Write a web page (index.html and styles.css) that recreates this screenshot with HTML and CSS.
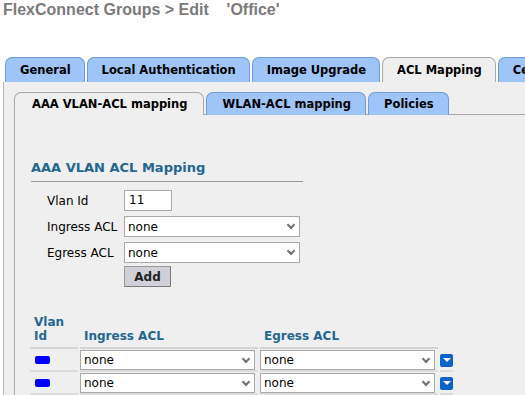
FILE: index.html
```html
<!DOCTYPE html>
<html lang="en">
<head>
  <meta charset="UTF-8" />
  <title>FlexConnect Groups &gt; Edit</title>
  <link rel="stylesheet" href="styles.css">
</head>
<body>
  <h1 class="page-title">FlexConnect Groups &gt; Edit &nbsp;&nbsp;&nbsp;'Office'</h1>

  <div class="tabs">
    <div class="tab">General</div>
    <div class="tab">Local Authentication</div>
    <div class="tab">Image Upgrade</div>
    <div class="tab active">ACL Mapping</div>
    <div class="tab">Central DHCP</div>
  </div>

  <div class="panel">
    <div class="subtabs">
      <div class="tab sub active">AAA VLAN-ACL mapping</div>
      <div class="tab sub">WLAN-ACL mapping</div>
      <div class="tab sub">Policies</div>
    </div>

    <div class="subpanel">
      <h2 class="section-title">AAA VLAN ACL Mapping</h2>

      <div class="form">
        <label for="vlan">Vlan Id</label>
        <input type="text" id="vlan" class="field short" value="11" />

        <label for="ingress">Ingress ACL</label>
        <span class="sel wide">
          <select id="ingress"><option>none</option></select>
        </span>

        <label for="egress">Egress ACL</label>
        <span class="sel wide">
          <select id="egress"><option>none</option></select>
        </span>

        <span></span>
        <div><button class="add-btn">Add</button></div>
      </div>

      <table class="map-table">
        <thead>
          <tr>
            <th class="c-id">Vlan<br>Id</th>
            <th class="c-acl">Ingress ACL</th>
            <th class="c-acl">Egress ACL</th>
            <th class="c-act"></th>
          </tr>
        </thead>
        <tbody>
          <tr>
            <td class="c-id"><span class="blob"></span></td>
            <td><span class="sel"><select><option>none</option></select></span></td>
            <td><span class="sel"><select><option>none</option></select></span></td>
            <td class="c-act"><span class="drop-btn"></span></td>
          </tr>
          <tr>
            <td class="c-id"><span class="blob"></span></td>
            <td><span class="sel"><select><option>none</option></select></span></td>
            <td><span class="sel"><select><option>none</option></select></span></td>
            <td class="c-act"><span class="drop-btn"></span></td>
          </tr>
        </tbody>
      </table>
    </div>
  </div>
</body>
</html>
```

FILE: styles.css
```css
body {
  margin: 0;
  background: #ffffff;
  font-family: 'DejaVu Sans', Verdana, sans-serif;
  font-size: 12px;
  color: #000;
  overflow: hidden;
  height: 395px;
}

.page-title {
  margin: 0;
  padding: 0 0 0 3px;
  height: 57px;
  font-family: 'Liberation Sans', Arial, sans-serif;
  font-size: 16px;
  line-height: 20px;
  color: #7a7a7a;
  font-weight: bold;
  white-space: pre;
}

.tabs {
  display: flex;
  gap: 2px;
  padding-left: 5px;
  height: 25px;
  white-space: nowrap;
  overflow: hidden;
}

.tab {
  flex: none;
  box-sizing: border-box;
  height: 25px;
  padding: 0 13px 0 14px;
  background: #9fc4f7;
  border: 1px solid #6f9bd8;
  border-bottom: none;
  border-radius: 7px 7px 0 0;
  font-weight: bold;
  font-size: 11.5px;
  line-height: 24px;
  color: #000;
}

.tab.active {
  background: #efefef;
  border-color: #a9a9a9;
}

.panel {
  margin-left: 3px;
  border-left: 1px solid #b5b5b5;
  background: #efefef;
  height: 313px;
  padding: 10px 0 0 10px;
}

.subtabs {
  display: flex;
  gap: 2px;
  height: 22px;
  border-bottom: 1px solid #a9a9a9;
}

.tab.sub {
  height: 23px;
  line-height: 23px;
  padding: 0 14px 0 15px;
}

.tab.sub.active {
  padding: 0 16px 0 17px;
}

.subpanel {
  border-left: 1px solid #a9a9a9;
  padding: 45px 0 0 16px;
  height: 300px;
}

.section-title {
  margin: 0;
  width: 272px;
  padding-bottom: 6px;
  border-bottom: 1px solid #9a9a9a;
  font-size: 13px;
  color: #23668f;
}

.form {
  display: grid;
  grid-template-columns: 77px auto;
  grid-template-rows: 21px 21px 21px 21px;
  row-gap: 5px;
  padding: 8px 0 0 16px;
  align-items: center;
  justify-items: start;
}

.form label {
  font-size: 12px;
}

.field {
  box-sizing: border-box;
  height: 21px;
  border: 1px solid #a9a9a9;
  background: #fff;
  font-family: 'DejaVu Sans', Verdana, sans-serif;
  font-size: 12px;
  padding: 0 4px;
}

.field.short {
  width: 48px;
  margin-top: -1px;
}

.sel {
  position: relative;
  display: inline-block;
  width: 176px;
  height: 21px;
}

.sel select {
  appearance: none;
  display: block;
  box-sizing: border-box;
  width: 100%;
  height: 100%;
  border: 1px solid #a9a9a9;
  border-radius: 0;
  background: #fff;
  font-family: 'DejaVu Sans', Verdana, sans-serif;
  font-size: 12px;
  padding: 0 0 0 3px;
  color: #000;
}

.sel::after {
  content: "";
  position: absolute;
  right: 6px;
  top: 6px;
  width: 4px;
  height: 4px;
  border-right: 2px solid #707070;
  border-bottom: 2px solid #707070;
  transform: rotate(45deg);
  pointer-events: none;
}

.add-btn {
  margin-top: -7px;
  box-sizing: border-box;
  width: 47px;
  height: 21px;
  background: #cfd0d8;
  border: 1px solid #9a9a9a;
  border-right-color: #7a7a7a;
  border-bottom-color: #7a7a7a;
  font-family: 'DejaVu Sans', Verdana, sans-serif;
  font-weight: bold;
  font-size: 12px;
  color: #222;
  padding: 0;
}

.map-table {
  margin-top: 26px;
  border-collapse: separate;
  border-spacing: 2px 0;
  margin-left: -3px;
}

.map-table th {
  text-align: left;
  vertical-align: bottom;
  color: #23668f;
  font-size: 12px;
  padding: 0 0 4px 4px;
  line-height: 14px;
  border-bottom: 2px solid #d3d3d3;
}

.map-table th.c-act {
  border-bottom: none;
}

.map-table td {
  padding: 1px 3px 0 0;
  border-bottom: 2px solid #dcdcdc;
  vertical-align: middle;
}

.map-table td.c-id {
  width: 48px;
  padding-left: 5px;
  box-sizing: border-box;
}

.map-table td.c-act {
  padding-right: 0;
}

.map-table .sel {
  width: 175px;
  height: 20px;
  display: block;
}

.blob {
  display: block;
  width: 15px;
  height: 8px;
  background: #0000ff;
  border-radius: 2px;
}

.drop-btn {
  display: block;
  position: relative;
  width: 13px;
  height: 13px;
  background: #0b62c8;
  border-radius: 2px;
}

.drop-btn::after {
  content: "";
  position: absolute;
  left: 3px;
  top: 4px;
  border-left: 4px solid transparent;
  border-right: 4px solid transparent;
  border-top: 4px solid #fff;
}
```
